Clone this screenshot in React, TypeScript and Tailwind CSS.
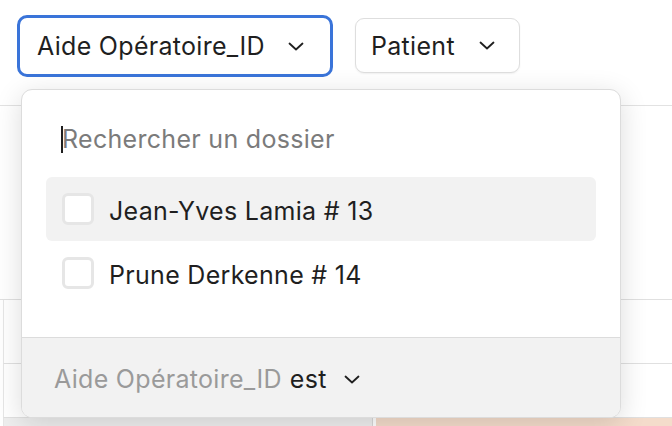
import { useState } from "react"

const font = { fontFamily: "Inter, 'Noto Sans', sans-serif" }

function Chevron({ className = "" }: { className?: string }) {
  return (
    <svg width="16" height="9" viewBox="0 0 16 9" fill="none" className={className}>
      <polyline points="1.5,1.5 8,7.5 14.5,1.5" stroke="currentColor" strokeWidth="1.8" strokeLinecap="round" strokeLinejoin="round" />
    </svg>
  )
}

const dossiers = [
  { id: 13, name: "Jean-Yves Lamia" },
  { id: 14, name: "Prune Derkenne" },
]

export default function App() {
  const [hovered] = useState(13)

  return (
    <div className="relative w-[672px] h-[426px] overflow-hidden bg-white text-[#1f1f1f] tracking-[0.3px]" style={font}>
      {/* Filter bar */}
      <div className="h-[106px] border-b border-[#e2e2e2] flex items-start gap-[22px] pl-[17px] pt-[15px]">
        <button className="h-[62px] w-[316px] rounded-[10px] border-[3px] border-[#3a74d9] bg-white flex items-center justify-between pl-[17px] pr-[26px] text-[25px]">
          <span className="pt-[2px]">Aide Opératoire_ID</span>
          <Chevron />
        </button>
        <button className="mt-[3px] h-[55px] w-[165px] rounded-[9px] border border-[#dedede] bg-white shadow-[0_1px_2px_rgba(0,0,0,0.06)] flex items-center justify-between pl-[15px] pr-[24px] text-[25px]">
          <span className="pt-[2px]">Patient</span>
          <Chevron />
        </button>
      </div>

      {/* Table behind */}
      <div className="h-[194px] border-b border-[#e0e0e0]" />
      <div className="h-[64px] border-b border-[#e0e0e0] border-l border-l-[#e6e6e6] ml-[3px]" />
      <div className="h-[54px] border-b border-[#e0e0e0] border-l border-l-[#e6e6e6] ml-[3px]" />
      <div className="flex h-[20px] ml-[3px] border-l border-l-[#e6e6e6]">
        <div className="w-[369px] bg-[#eeeeee] border-r border-[#d8d8d8]" />
        <div className="flex-1 ml-[3px] bg-[#f4dccb]" />
      </div>

      {/* Dropdown popover */}
      <div className="absolute left-[21px] top-[89px] w-[600px] h-[329px] rounded-[11px] border border-[#dcdcdc] bg-white shadow-[0_6px_28px_rgba(0,0,0,0.14)] overflow-hidden flex flex-col">
        <div className="pt-[35px] pb-[24px] pl-[39px]">
          <div className="flex items-center h-[28px] text-[25px] text-[#7b7b7b]">
            <span className="w-[2px] h-[27px] bg-[#1f1f1f] mr-[-1px]" />
            <span className="pt-[2px]">Rechercher un dossier</span>
          </div>
        </div>
        <div className="px-[24px]">
          {dossiers.map((d) => (
            <div
              key={d.id}
              className={`h-[64px] rounded-[6px] flex items-center pl-[16px] gap-[15px] ${hovered === d.id ? "bg-[#f2f2f2]" : ""}`}
            >
              <span className="w-[32px] h-[32px] rounded-[6px] border-[3px] border-[#e6e6e6] bg-white" />
              <span className="text-[25px] pt-[5px]">
                {d.name} # {d.id}
              </span>
            </div>
          ))}
        </div>
        <div className="mt-auto h-[80px] border-t border-[#dcdcdc] bg-[#f2f2f2] flex items-center pl-[32px] text-[25px] pt-[4px]">
          <span className="text-[#9a9a9a]">Aide Opératoire_ID</span>
          <span className="ml-[8px]">est</span>
          <Chevron className="ml-[17px]" />
        </div>
      </div>
    </div>
  )
}
